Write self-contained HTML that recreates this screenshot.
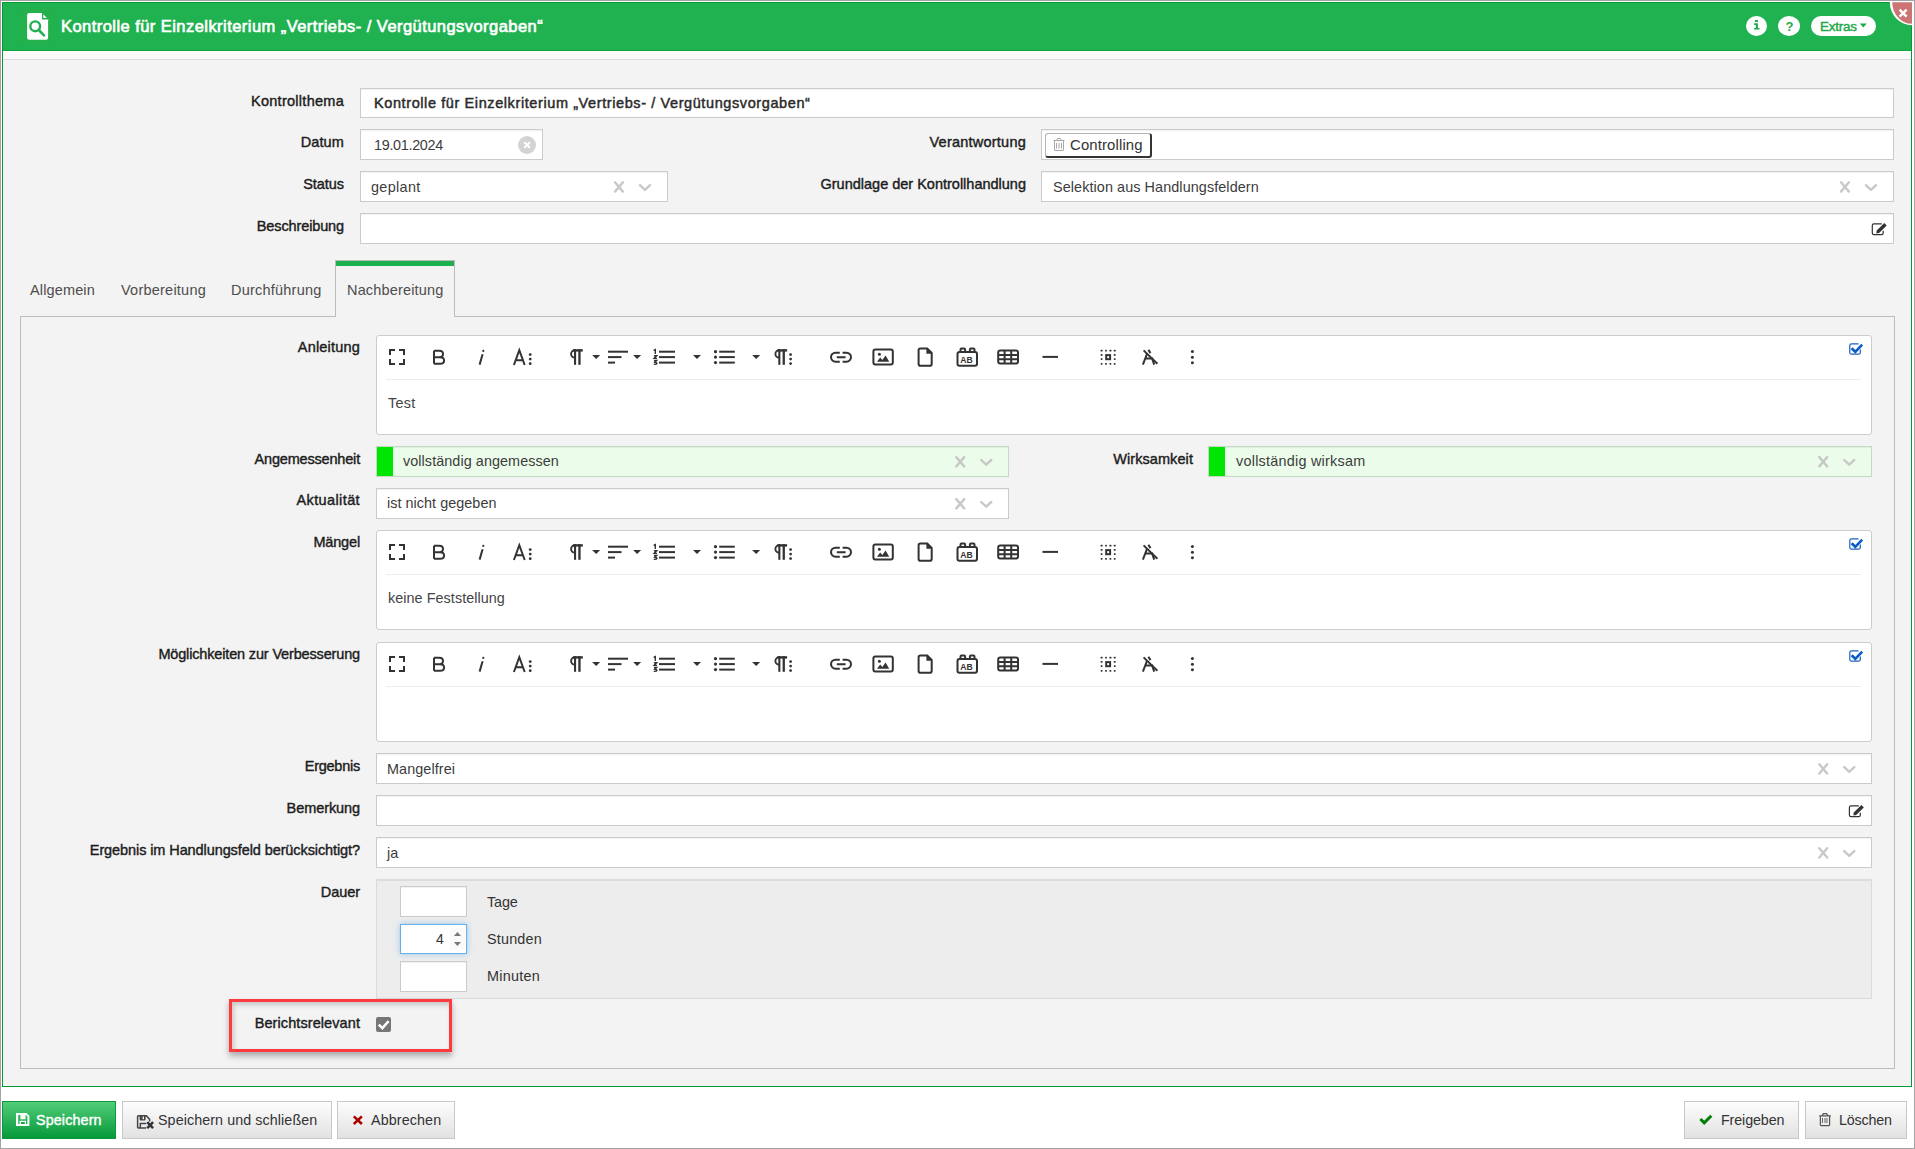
<!DOCTYPE html>
<html><head><meta charset="utf-8"><title>Kontrolle</title><style>
*{box-sizing:border-box;margin:0;padding:0}
html,body{width:1915px;height:1149px;overflow:hidden;background:#fff;font-family:"Liberation Sans",sans-serif}
.a{position:absolute}
.t{position:absolute;white-space:nowrap;line-height:1}
.lbl{position:absolute;white-space:nowrap;line-height:1;font-size:14.5px;-webkit-text-stroke:0.4px #1c1c1c;color:#1c1c1c;text-align:right}
.box{position:absolute;background:#fff;border:1px solid #cbcbcb;box-shadow:inset 0 1px 1px rgba(0,0,0,.06)}
.ed{position:absolute;background:#fff;border:1px solid #cdcdcd;border-radius:3px}
.sep{position:absolute;height:1px;background:#ececec}
.val{position:absolute;white-space:nowrap;line-height:1;font-size:14.4px;color:#3c3c3c}
.tab{position:absolute;white-space:nowrap;line-height:1;font-size:14.5px;color:#4d4d4d}
.btn{position:absolute;border:1px solid #c8c8c8;background:linear-gradient(#fdfdfd,#e2e2e2);height:38px}
.btxt{position:absolute;white-space:nowrap;line-height:1;font-size:14.3px;color:#333}
svg{position:absolute;left:0;top:0}
.xi{fill:none;stroke:#c8c8c8;stroke-width:2.4;stroke-linecap:round;stroke-linejoin:round}
.tb{fill:none;stroke:#333;stroke-width:2}
.tf{fill:#333}
</style></head><body>
<div class="a" style="left:0;top:0;width:1915px;height:1149px;border:1px solid #a3a3a3"></div>
<div class="a" style="left:2px;top:2px;width:1910px;height:1085px;border:1px solid #06992f;background:#f3f3f3"></div>
<div class="a" style="left:3px;top:3px;width:1908px;height:48px;background:#20b150;border-bottom:1px solid #0ca83e"></div>
<div class="a" style="left:3px;top:51px;width:1908px;height:9px;background:#fafafa;border-top:1px solid #fff;border-bottom:1px solid #dddddd"></div>
<div class="a" style="left:20px;top:9px;width:34px;height:34px;border-radius:6px;background:#24b04a"></div>
<div class="t" style="left:61px;top:18px;font-size:16.5px;-webkit-text-stroke:0.65px #fff;color:#fff;letter-spacing:0.447px;">Kontrolle für Einzelkriterium „Vertriebs- / Vergütungsvorgaben“</div>
<div class="a" style="left:1746px;top:16px;width:21px;height:20px;border-radius:50%;background:#fff"></div>
<div class="a" style="left:1778px;top:16px;width:22px;height:20px;border-radius:50%;background:#fff"></div>
<div class="a" style="left:1811px;top:16px;width:65px;height:20px;border-radius:10px;background:#fff"></div>
<div class="t" style="left:1820px;top:19.5px;font-size:13.4px;-webkit-text-stroke:0.45px #1fa84b;color:#1fa84b;letter-spacing:-0.2px">Extras</div>
<div class="t" style="left:1785.5px;top:19.5px;font-size:13px;font-weight:bold;color:#1fa84b">?</div>
<div class="lbl" style="left:0;width:344px;top:94px;letter-spacing:0.272px;">Kontrollthema</div>
<div class="box" style="left:360px;top:88px;width:1534px;height:30px;"></div>
<div class="t" style="left:374px;top:96px;font-size:14.5px;-webkit-text-stroke:0.45px #2a2a2a;color:#2a2a2a;letter-spacing:0.596px;">Kontrolle für Einzelkriterium „Vertriebs- / Vergütungsvorgaben“</div>
<div class="lbl" style="left:0;width:344px;top:135px;letter-spacing:0.116px;">Datum</div>
<div class="box" style="left:360px;top:129px;width:183px;height:31px;"></div>
<div class="val" style="left:374px;top:138px;letter-spacing:-0.4px;letter-spacing:-0.313px;">19.01.2024</div>
<div class="a" style="left:518px;top:136px;width:18px;height:18px;border-radius:50%;background:#d3d3d3"></div>
<div class="lbl" style="left:0;width:1026px;top:135px;letter-spacing:0.230px;">Verantwortung</div>
<div class="box" style="left:1041px;top:129px;width:853px;height:31px;"></div>
<div class="a" style="left:1045px;top:133px;width:107px;height:25px;background:#fff;border:1px solid #b5b5b5;border-right:2px solid #333;border-bottom:2px solid #333;border-radius:3px"></div>
<div class="val" style="left:1070px;top:138px;font-size:14.9px;color:#333;letter-spacing:0.138px;">Controlling</div>
<div class="lbl" style="left:0;width:344px;top:177px;letter-spacing:-0.052px;">Status</div>
<div class="box" style="left:360px;top:171px;width:308px;height:31px;"></div>
<div class="val" style="left:371px;top:180px;;letter-spacing:0.340px;">geplant</div>
<div class="lbl" style="left:0;width:1026px;top:177px;letter-spacing:-0.003px;">Grundlage der Kontrollhandlung</div>
<div class="box" style="left:1041px;top:171px;width:853px;height:31px;"></div>
<div class="val" style="left:1053px;top:180px;;letter-spacing:0.086px;">Selektion aus Handlungsfeldern</div>
<div class="lbl" style="left:0;width:344px;top:219px;letter-spacing:-0.123px;">Beschreibung</div>
<div class="box" style="left:360px;top:213px;width:1534px;height:31px;"></div>
<div class="a" style="left:20px;top:316px;width:1875px;height:753px;border:1px solid #bdbdbd"></div>
<div class="a" style="left:335px;top:260px;width:120px;height:57px;background:#f3f3f3;border:1px solid #bdbdbd;border-bottom:none"><div class="a" style="left:0;top:0;width:118px;height:5px;background:#1fb04e"></div></div>
<div class="tab" style="left:30px;top:283px;letter-spacing:0.136px;">Allgemein</div>
<div class="tab" style="left:121px;top:283px;letter-spacing:0.230px;">Vorbereitung</div>
<div class="tab" style="left:231px;top:283px;letter-spacing:0.220px;">Durchführung</div>
<div class="tab" style="left:347px;top:283px;letter-spacing:0.167px;">Nachbereitung</div>
<div class="lbl" style="left:0;width:360px;top:340px;letter-spacing:0.192px;">Anleitung</div>
<div class="ed" style="left:376px;top:335px;width:1496px;height:100px"></div>
<div class="sep" style="left:386px;top:379px;width:1475px"></div>
<div class="val" style="left:388px;top:396px;color:#444;letter-spacing:0.248px;">Test</div>
<div class="lbl" style="left:0;width:360px;top:452px;letter-spacing:-0.187px;">Angemessenheit</div>
<div class="box" style="left:376px;top:446px;width:633px;height:31px;background:#ebfcea;border-color:#c6d9c6"></div>
<div class="a" style="left:377px;top:447px;width:16px;height:29px;background:#00e600"></div>
<div class="val" style="left:403px;top:454px;;letter-spacing:0.068px;">vollständig angemessen</div>
<div class="lbl" style="left:0;width:1193px;top:452px;letter-spacing:0.077px;">Wirksamkeit</div>
<div class="box" style="left:1208px;top:446px;width:664px;height:31px;background:#ebfcea;border-color:#c6d9c6"></div>
<div class="a" style="left:1209px;top:447px;width:16px;height:29px;background:#00e600"></div>
<div class="val" style="left:1236px;top:454px;;letter-spacing:0.244px;">vollständig wirksam</div>
<div class="lbl" style="left:0;width:360px;top:493px;letter-spacing:0.384px;">Aktualität</div>
<div class="box" style="left:376px;top:488px;width:633px;height:31px;"></div>
<div class="val" style="left:387px;top:496px;;letter-spacing:0.040px;">ist nicht gegeben</div>
<div class="lbl" style="left:0;width:360px;top:535px;letter-spacing:-0.160px;">Mängel</div>
<div class="ed" style="left:376px;top:530px;width:1496px;height:100px"></div>
<div class="sep" style="left:386px;top:574px;width:1475px"></div>
<div class="val" style="left:388px;top:591px;color:#444;letter-spacing:0.050px;">keine Feststellung</div>
<div class="lbl" style="left:0;width:360px;top:647px;letter-spacing:-0.158px;">Möglichkeiten zur Verbesserung</div>
<div class="ed" style="left:376px;top:642px;width:1496px;height:100px"></div>
<div class="sep" style="left:386px;top:686px;width:1475px"></div>
<div class="lbl" style="left:0;width:360px;top:759px;letter-spacing:-0.242px;">Ergebnis</div>
<div class="box" style="left:376px;top:753px;width:1496px;height:31px;"></div>
<div class="val" style="left:387px;top:762px;;letter-spacing:0.090px;">Mangelfrei</div>
<div class="lbl" style="left:0;width:360px;top:801px;letter-spacing:-0.084px;">Bemerkung</div>
<div class="box" style="left:376px;top:795px;width:1496px;height:31px;"></div>
<div class="lbl" style="left:0;width:360px;top:843px;letter-spacing:-0.094px;">Ergebnis im Handlungsfeld berücksichtigt?</div>
<div class="box" style="left:376px;top:837px;width:1496px;height:31px;"></div>
<div class="val" style="left:387px;top:846px;;">ja</div>
<div class="lbl" style="left:0;width:360px;top:885px;letter-spacing:-0.060px;">Dauer</div>
<div class="a" style="left:376px;top:879px;width:1496px;height:120px;background:#ededed;border:1px solid #dadada;border-top:2px solid #dcdcdc"></div>
<div class="box" style="left:400px;top:886px;width:67px;height:31px;"></div>
<div class="a" style="left:400px;top:924px;width:67px;height:30px;background:#fff;border:1px solid #66afe9;box-shadow:0 0 6px rgba(102,175,233,.6)"></div>
<div class="a" style="left:450px;top:928px;width:15px;height:22px;background:#fafafa"></div>
<div class="box" style="left:400px;top:961px;width:67px;height:31px;"></div>
<div class="val" style="left:436px;top:932px;color:#333;font-size:14px;">4</div>
<div class="val" style="left:487px;top:895px;color:#333;letter-spacing:-0.155px;">Tage</div>
<div class="val" style="left:487px;top:932px;color:#333;letter-spacing:0.182px;">Stunden</div>
<div class="val" style="left:487px;top:969px;color:#333;letter-spacing:0.257px;">Minuten</div>
<div class="lbl" style="left:0;width:360px;top:1016px;letter-spacing:0.083px;">Berichtsrelevant</div>
<div class="a" style="left:376px;top:1017px;width:15px;height:15px;border-radius:2px;background:#767676"></div>
<div class="a" style="left:229px;top:999px;width:223px;height:53px;border:3px solid #fd3a3d;box-shadow:0 4px 6px rgba(0,0,0,.3), inset 2px 3px 5px rgba(0,0,0,.18)"></div>
<div class="a" style="left:2px;top:1087px;width:1911px;height:61px;background:#fff"></div>
<div class="btn" style="left:2px;top:1101px;width:114px;background:linear-gradient(#52cc79,#06993a);border-color:#0b9a3b"></div>
<div class="btxt" style="left:36px;top:1113px;color:#fff;font-size:14.3px;-webkit-text-stroke:0.4px #fff;letter-spacing:0.145px;">Speichern</div>
<div class="btn" style="left:122px;top:1101px;width:210px"></div>
<div class="btxt" style="left:158px;top:1113px;letter-spacing:0.084px;">Speichern und schließen</div>
<div class="btn" style="left:337px;top:1101px;width:118px"></div>
<div class="btxt" style="left:371px;top:1113px;letter-spacing:0.116px;">Abbrechen</div>
<div class="btn" style="left:1684px;top:1101px;width:115px"></div>
<div class="btxt" style="left:1721px;top:1113px;letter-spacing:-0.110px;">Freigeben</div>
<div class="btn" style="left:1805px;top:1101px;width:102px"></div>
<div class="btxt" style="left:1839px;top:1113px;letter-spacing:-0.166px;">Löschen</div>
<div class="a" style="left:0;top:1148px;width:1915px;height:1px;background:#a3a3a3"></div>
<svg width="1915" height="1149" viewBox="0 0 1915 1149"><path class="xi" d="M1841.0,182.3L1848.9,191.6M1848.9,182.3L1841.0,191.6"/><path class="xi" d="M1865.9,185.2L1870.9,189.9L1876.0,185.2"/><path class="xi" d="M615.0,182.3L622.9,191.6M622.9,182.3L615.0,191.6"/><path class="xi" d="M639.9,185.2L645.0,189.9L650.0,185.2"/><path class="xi" d="M956.3,457.1L964.2,466.4M964.2,457.1L956.3,466.4"/><path class="xi" d="M981.2,460.0L986.2,464.7L991.3,460.0"/><path class="xi" d="M1819.3,457.1L1827.2,466.4M1827.2,457.1L1819.3,466.4"/><path class="xi" d="M1844.2,460.0L1849.2,464.7L1854.3,460.0"/><path class="xi" d="M956.3,499.1L964.2,508.4M964.2,499.1L956.3,508.4"/><path class="xi" d="M981.2,502.0L986.2,506.7L991.3,502.0"/><path class="xi" d="M1819.3,764.2L1827.2,773.5M1827.2,764.2L1819.3,773.5"/><path class="xi" d="M1844.2,767.1L1849.2,771.8L1854.3,767.1"/><path class="xi" d="M1819.3,848.2L1827.2,857.5M1827.2,848.2L1819.3,857.5"/><path class="xi" d="M1844.2,851.1L1849.2,855.8L1854.3,851.1"/><defs><g id="tbar"><path class="tb" d="M390,355V350H395M399,350H404V355M404,359V364H399M395,364H390V359"/><path class="tb" stroke-width="2.2" d="M434,350.7V363.8M434,350.7H439.3C441.7,350.7 443,352.2 443,354C443,355.9 441.7,357.2 439.3,357.2H434M434,357.2H440C442.6,357.2 444.1,358.7 444.1,360.5C444.1,362.4 442.6,363.8 440,363.8H434"/><circle class="tf" cx="483.3" cy="350.9" r="1.1"/><path class="tb" stroke-width="1.8" d="M482.6,354.2L479.6,364.6"/><path class="tb" stroke-width="2" d="M513.9,365L519.3,350.2L524.7,365M515.7,360.2H522.9"/><circle class="tf" cx="530.2" cy="354.6" r="1.4"/><circle class="tf" cx="530.2" cy="359.1" r="1.4"/><circle class="tf" cx="530.2" cy="363.7" r="1.4"/><rect class="tf" x="573.2" y="349.2" width="9.6" height="2.4"/><rect class="tf" x="574.0" y="349.2" width="2.1" height="15.6"/><rect class="tf" x="578.3" y="349.2" width="2.3" height="15.6"/><path fill="none" stroke="#333" stroke-width="1.9" d="M574.8,350.3A3.7,3.6 0 0 0 574.8,357.5"/><path class="tf" d="M592.2,354.9H600.2L596.2,358.9Z"/><rect class="tf" x="608" y="350.7" width="20" height="2"/><rect class="tf" x="608" y="356.1" width="13.5" height="2"/><rect class="tf" x="608" y="361.6" width="7" height="2"/><path class="tf" d="M633.1,354.9H641.1L637.1,358.9Z"/><rect class="tf" x="659" y="350.7" width="16" height="2"/><rect class="tf" x="659" y="356.1" width="16" height="2"/><rect class="tf" x="659" y="361.6" width="16" height="2"/><path fill="none" stroke="#333" stroke-width="1.4" d="M653.6,350.4L655.3,349.6V354M653.9,355.7H656.7L654.1,358.4H657M653.9,360.5H656.6L654.9,362.2Q657,362.3 656.9,363.5Q656.7,364.5 653.8,364.3"/><path class="tf" d="M693,354.9H701L697,358.9Z"/><circle class="tf" cx="715.5" cy="351.7" r="1.6"/><circle class="tf" cx="715.5" cy="357.1" r="1.6"/><circle class="tf" cx="715.5" cy="362.6" r="1.6"/><rect class="tf" x="719.2" y="350.7" width="15.6" height="2"/><rect class="tf" x="719.2" y="356.1" width="15.6" height="2"/><rect class="tf" x="719.2" y="361.6" width="15.6" height="2"/><path class="tf" d="M752.2,354.9H760.2L756.2,358.9Z"/><rect class="tf" x="777.5" y="349.2" width="9.6" height="2.4"/><rect class="tf" x="778.3" y="349.2" width="2.1" height="15.6"/><rect class="tf" x="782.6" y="349.2" width="2.3" height="15.6"/><path fill="none" stroke="#333" stroke-width="1.9" d="M779.1,350.3A3.7,3.6 0 0 0 779.1,357.5"/><circle class="tf" cx="790.6" cy="354.6" r="1.4"/><circle class="tf" cx="790.6" cy="359.1" r="1.4"/><circle class="tf" cx="790.6" cy="363.6" r="1.4"/><path class="tb" d="M839.8,352.7H835.5A4.5,4.5 0 0 0 835.5,361.7H839.8M842.6,352.7H846.5A4.5,4.5 0 0 1 846.5,361.7H842.6M836.8,357.2H845.6"/><rect class="tb" x="873.4" y="349.4" width="19.4" height="15.1" rx="2"/><circle class="tf" cx="879.4" cy="354.3" r="1.5"/><path class="tf" d="M877,361.8L880.2,357.6L882.3,360L885.6,355.6L889.2,361.8Z"/><path class="tb" d="M918.6,350.2Q918.6,348.4 920.4,348.4H927.2L931.7,353V363.9Q931.7,365.7 929.9,365.7H920.4Q918.6,365.7 918.6,363.9Z"/><path class="tf" d="M926.4,348.4H927.6L931.7,352.5V353.8H926.4Z"/><rect class="tb" x="957.5" y="352" width="19.5" height="13.7" rx="2"/><rect class="tb" x="960.5" y="348.4" width="4.6" height="3.6" rx="1"/><rect class="tb" x="969.9" y="348.4" width="4.6" height="3.6" rx="1"/><text x="960.2" y="362.6" font-size="8.6" font-weight="bold" fill="#333" font-family="Liberation Sans">AB</text><rect class="tb" x="998.2" y="350.6" width="19.8" height="13" rx="2"/><path class="tb" stroke-width="1.6" d="M998.2,355H1018M998.2,359.3H1018M1004.6,350.6V363.6M1011.2,350.6V363.6"/><rect class="tf" x="1042.5" y="355.9" width="15.5" height="2"/><rect class="tf" x="1100.7" y="349.8" width="1.8" height="1.8" rx="0.4"/><rect class="tf" x="1100.7" y="362.9" width="1.8" height="1.8" rx="0.4"/><rect class="tf" x="1105.1" y="349.8" width="1.8" height="1.8" rx="0.4"/><rect class="tf" x="1105.1" y="362.9" width="1.8" height="1.8" rx="0.4"/><rect class="tf" x="1109.5" y="349.8" width="1.8" height="1.8" rx="0.4"/><rect class="tf" x="1109.5" y="362.9" width="1.8" height="1.8" rx="0.4"/><rect class="tf" x="1113.8" y="349.8" width="1.8" height="1.8" rx="0.4"/><rect class="tf" x="1113.8" y="362.9" width="1.8" height="1.8" rx="0.4"/><rect class="tf" x="1100.7" y="354.0" width="1.8" height="1.8" rx="0.4"/><rect class="tf" x="1113.8" y="354.0" width="1.8" height="1.8" rx="0.4"/><rect class="tf" x="1100.7" y="358.2" width="1.8" height="1.8" rx="0.4"/><rect class="tf" x="1113.8" y="358.2" width="1.8" height="1.8" rx="0.4"/><rect class="tb" stroke-width="2" x="1106.2" y="355.1" width="3.9" height="4.1"/><path class="tb" stroke-width="2" d="M1143.6,350.4L1157.4,363.8"/><path class="tb" stroke-width="1.9" d="M1142.9,364.6L1146.9,354.2M1145.6,358.6H1151.6M1151.9,357.6L1154.2,364.6M1148.4,349.7L1150.5,353.1"/><circle class="tf" cx="1192.4" cy="351.5" r="1.5"/><circle class="tf" cx="1192.4" cy="357.2" r="1.5"/><circle class="tf" cx="1192.4" cy="362.7" r="1.5"/><path fill="none" stroke="#1c5fc0" stroke-width="1.2" d="M1858.5,343.8H1851.6Q1849.8,343.8 1849.8,345.6V352.4Q1849.8,354.2 1851.6,354.2H1858.5Q1860.3,354.2 1860.3,352.4V349.6"/><path fill="none" stroke="#0a5cc7" stroke-width="2.6" d="M1851.6,348.2L1855.3,351.8L1862.2,344.7"/></g></defs><use href="#tbar"/><use href="#tbar" transform="translate(0,195)"/><use href="#tbar" transform="translate(0,307)"/><path fill="none" stroke="#333" stroke-width="1.2" d="M1881.7,223.79999999999998H1873.9Q1872.3,223.79999999999998 1872.3,225.39999999999998V233.1Q1872.3,234.7 1873.9,234.7H1881.6000000000001Q1883.2,234.7 1883.2,233.1V230.7"/><path fill="#333" d="M1876.7,230.6L1884.3,223.0L1886.7,225.39999999999998L1879.1000000000001,233.0L1876.3,233.39999999999998Z"/><path fill="none" stroke="#333" stroke-width="1.2" d="M1858.8,805.8000000000001H1851.0Q1849.3999999999999,805.8000000000001 1849.3999999999999,807.4000000000001V815.1Q1849.3999999999999,816.7 1851.0,816.7H1858.7Q1860.3,816.7 1860.3,815.1V812.7"/><path fill="#333" d="M1853.8,812.6L1861.3999999999999,805.0L1863.8,807.4000000000001L1856.2,815.0L1853.3999999999999,815.4000000000001Z"/><path fill="none" stroke="#fff" stroke-width="2" d="M524.3,142.3L529.8,147.8M529.8,142.3L524.3,147.8"/><path fill="none" stroke="#a8a8a8" stroke-width="1" d="M1053.5,140.5H1064.5M1057,140.5V139.3Q1057,138.5 1057.8,138.5H1060.2Q1061,138.5 1061,139.3V140.5M1054.5,140.5V150Q1054.5,150.5 1055,150.5H1063Q1063.5,150.5 1063.5,150V140.5M1056.5,143V148.5M1059,143V148.5M1061.5,143V148.5"/><path fill="none" stroke="#fff" stroke-width="2.5" d="M378.8,1024.6L382.4,1028.2L388.6,1021.2"/><path fill="#777" d="M453.9,936H461L457.45,931.9Z M453.9,942H461L457.45,946.1Z"/><path fill="#fff" d="M29.1,13H42L48.1,19.2V37.7Q48.1,39.7 46.1,39.7H29.1Q27.1,39.7 27.1,37.7V15Q27.1,13 29.1,13Z"/><path fill="#21b050" d="M42,13H43.3V18H48.1V19.4H42Z"/><circle cx="35.2" cy="26.3" r="4.9" fill="none" stroke="#21b050" stroke-width="2.4"/><path stroke="#21b050" stroke-width="2.6" stroke-linecap="round" d="M38.8,30L44,35.3"/><path fill="#1fa84b" d="M1754.9,19.9H1757.9V21.9H1754.9Z M1754.1,23.2H1757.9V28H1759.5V29.6H1754.1V28H1755.8V24.9H1754.1Z"/><path fill="#1fa84b" d="M1859.8,23.4H1866.8L1863.3,27.4Z"/><path fill="#fff" d="M1889.8,2H1912V25.2A22.2,23.2 0 0 1 1889.8,2Z"/><path fill="#cc7474" d="M1892.2,2.2H1912V23.8A19.8,21.6 0 0 1 1892.2,2.2Z"/><path fill="none" stroke="#fff" stroke-width="2.4" d="M1899.6,9.6L1906.6,16.6M1906.6,9.6L1899.6,16.6"/><path fill="#fff" d="M16,1113H26.5L29.4,1115.9V1126H16Z"/><path fill="#2bb658" d="M18.2,1115H20.4V1119.2H25.6V1115H26L27.4,1116.6V1124H18.2Z"/><path fill="#fff" d="M19.6,1120.8H26V1124H19.6Z"/><path fill="#17a546" d="M20.9,1122H24.8V1124H20.9Z"/><path fill="#fff" d="M23.4,1115.6H24.6V1118.4H23.4Z"/><path fill="none" stroke="#444" stroke-width="1.5" d="M146.2,1127.9H138.4Q137.6,1127.9 137.6,1127.1V1116.6Q137.6,1115.8 138.4,1115.8H146.3L149.6,1119.4V1121.4M140.3,1127.6V1123.6H146.2"/><path fill="#444" d="M139.6,1115.8H145.6V1119.6Q145.6,1120.5 144.7,1120.5H140.5Q139.6,1120.5 139.6,1119.6Z"/><path fill="#eee" d="M142.6,1116.6H144V1119.3H142.6Z"/><path fill="none" stroke="#333" stroke-width="2.5" d="M147.2,1122.2L153.1,1128.1M153.1,1122.2L147.2,1128.1"/><path fill="none" stroke="#a00" stroke-width="2.6" d="M353.8,1116.4L361.9,1124M361.9,1116.4L353.8,1124"/><path fill="none" stroke="#008000" stroke-width="3" d="M1700.4,1119L1704.2,1122.9L1711.3,1115.7"/><path fill="none" stroke="#555" stroke-width="1.2" d="M1819.2,1115.8H1830.8M1822.2,1115.6L1823.4,1113.6H1826.6L1827.8,1115.6M1820.4,1116V1124.8Q1820.4,1125.6 1821.2,1125.6H1828.8Q1829.6,1125.6 1829.6,1124.8V1116"/><path fill="#555" d="M1822,1118H1822.9V1123H1822Z"/><path fill="#aaa" d="M1824,1118H1828V1123H1824Z"/></svg>
</body></html>
